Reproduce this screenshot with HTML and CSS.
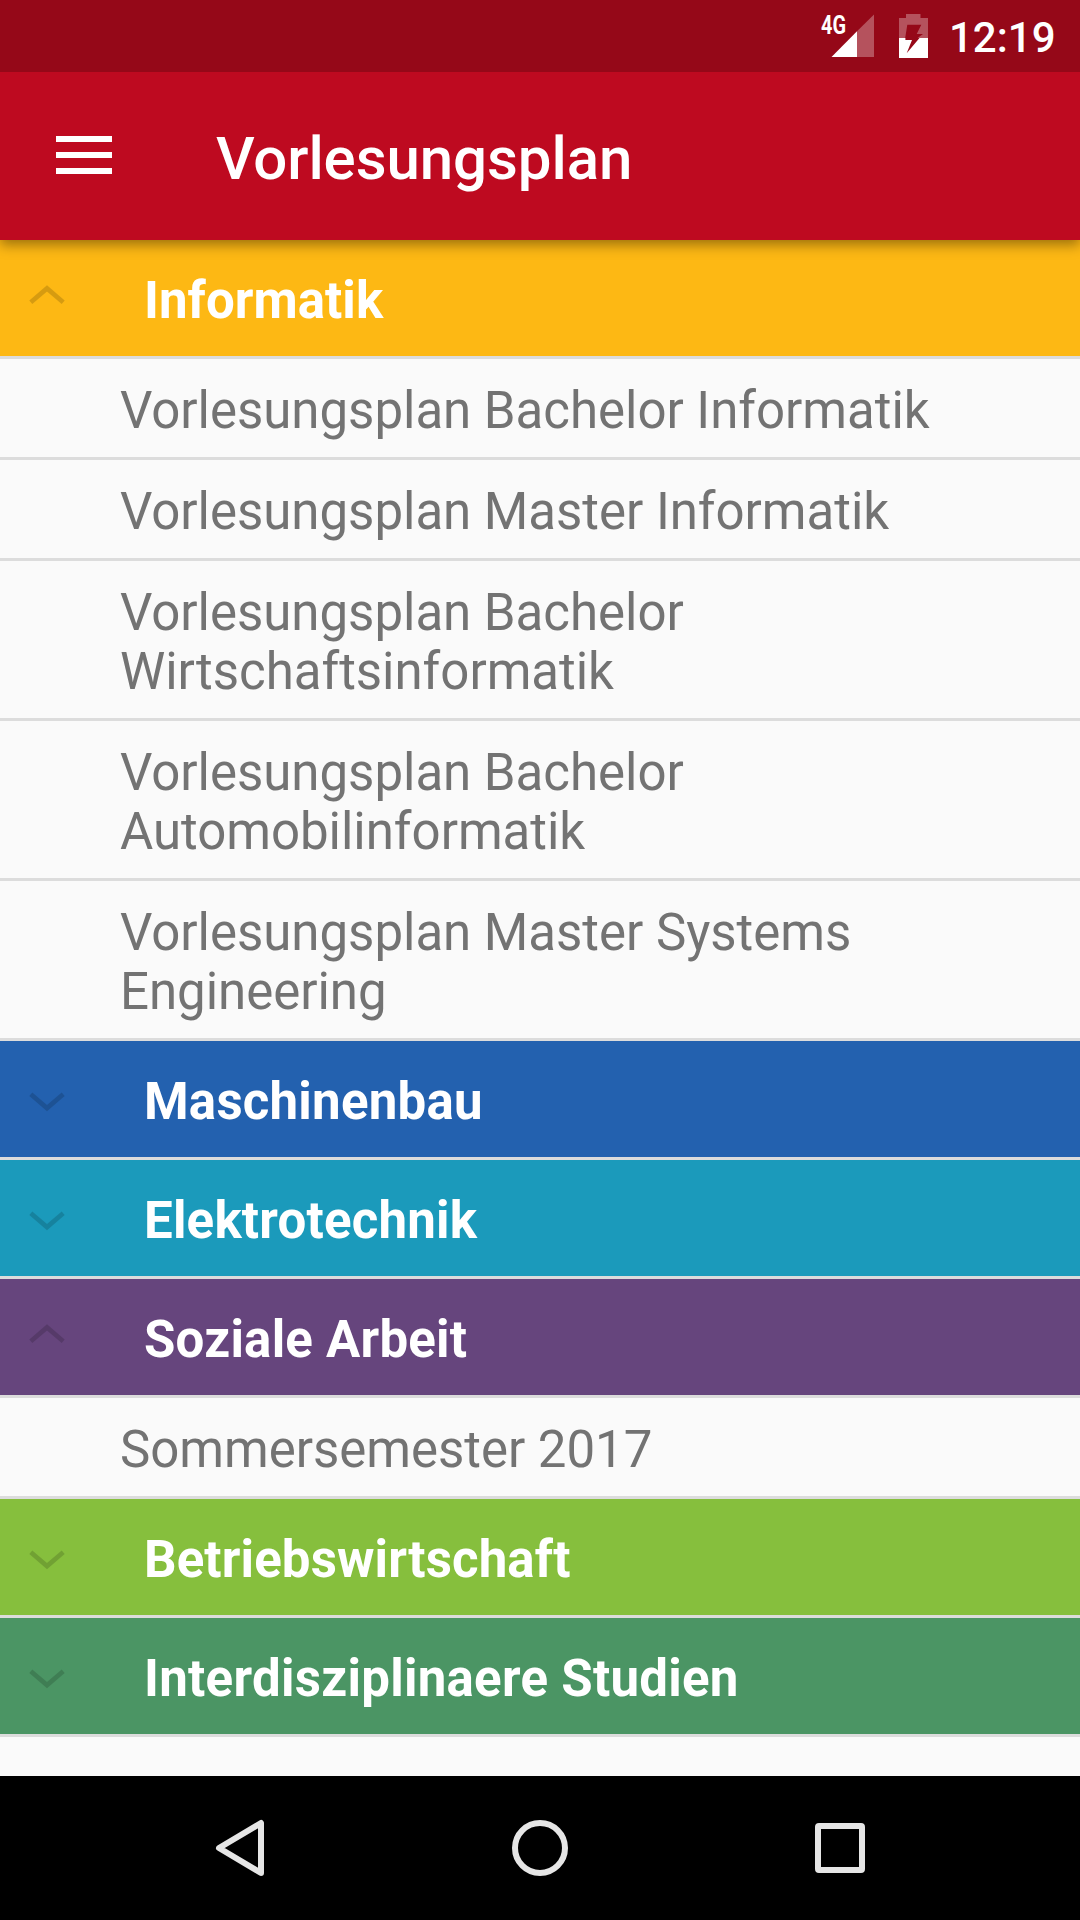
FILE: index.html
```html
<!DOCTYPE html>
<html lang="de">
<head>
<meta charset="utf-8">
<title>Vorlesungsplan</title>
<link rel="stylesheet" href="styles.css">
</head>
<body>
<svg class="symbols" width="0" height="0" aria-hidden="true">
  <symbol id="up" viewBox="0 0 36 20"><path d="M1.8 17.3 18 3.4 34.200 17.3"/></symbol>
  <symbol id="down" viewBox="0 0 36 20"><path d="M1.8 2.200 18 16.100 34.200 2.200"/></symbol>
</svg>
<div class="screen">
  <div class="status-bar">
    <svg class="signal" width="54" height="58" viewBox="0 -14 54 58">
      <path class="dim" d="M37 17.2V43H54V.5z"/>
      <path class="lit" d="M11.5 43 37 17.2V43z"/>
      <text class="network" x="1" y="19.5" textLength="25" lengthAdjust="spacingAndGlyphs">4G</text>
    </svg>
    <svg class="battery" width="29" height="44" viewBox="0 0 29 44">
      <path class="dim" d="M7 0H21.5V4H29V24H18.6L24 20H17.7L22.3 10.7H8.3L6.2 24H0V4H7z"/>
      <path class="lit" d="M0 24H6.4V26H13L7.7 39.3 20.5 24H29V44H0z"/>
    </svg>
    <span class="clock">12:19</span>
  </div>
  <header class="app-bar">
    <svg class="menu" width="56" height="38" viewBox="0 0 56 38"><path d="M0 0H56V6H0zM0 16H56V22H0zM0 32H56V38H0z"/></svg>
    <h1 class="title">Vorlesungsplan</h1>
  </header>
  <main class="list">
    <h2 class="group informatik"><svg class="chevron open"><use href="#up"/></svg><span>Informatik</span></h2>
    <div class="child">Vorlesungsplan Bachelor Informatik</div>
    <div class="child">Vorlesungsplan Master Informatik</div>
    <div class="child">Vorlesungsplan Bachelor Wirtschaftsinformatik</div>
    <div class="child">Vorlesungsplan Bachelor Automobilinformatik</div>
    <div class="child">Vorlesungsplan Master Systems Engineering</div>
    <h2 class="group maschinenbau"><svg class="chevron"><use href="#down"/></svg><span>Maschinenbau</span></h2>
    <h2 class="group elektrotechnik"><svg class="chevron"><use href="#down"/></svg><span>Elektrotechnik</span></h2>
    <h2 class="group soziale"><svg class="chevron open"><use href="#up"/></svg><span>Soziale Arbeit</span></h2>
    <div class="child">Sommersemester 2017</div>
    <h2 class="group betrieb"><svg class="chevron"><use href="#down"/></svg><span>Betriebswirtschaft</span></h2>
    <h2 class="group inter"><svg class="chevron"><use href="#down"/></svg><span>Interdisziplinaere Studien</span></h2>
  </main>
  <nav class="nav-bar">
    <svg width="60" height="60" viewBox="0 0 60 60"><path d="M51 5V55L9 30z"/></svg>
    <svg width="60" height="60" viewBox="0 0 60 60"><circle cx="30" cy="30" r="25"/></svg>
    <svg width="60" height="60" viewBox="0 0 60 60"><rect x="8" y="8" width="44" height="44" rx="1"/></svg>
  </nav>
</div>
</body>
</html>
```
FILE: styles.css
```css
* {
  box-sizing: border-box;
}

body {
  margin: 0;
  font-family: Roboto, "Liberation Sans", sans-serif;
}

.symbols {
  display: none;
}

.screen {
  display: flex;
  flex-direction: column;
  width: 1080px;
  height: 1920px;
  overflow: hidden;
  background: #fafafa;
}

.status-bar {
  position: relative;
  z-index: 2;
  display: flex;
  flex: none;
  height: 72px;
  padding: 0 25px 0 820px;
  background: #950818;
}

.signal,
.battery {
  flex: none;
}

.battery {
  margin: 14px 0 0 25px;
}

.dim {
  fill: #fff;
  fill-opacity: 0.3;
}

.lit,
.network {
  fill: #fff;
}

.network {
  font-size: 26px;
  font-weight: 700;
}

.clock {
  margin: 14px 0 0 21px;
  color: #fff;
  font-size: 42px;
  font-weight: 500;
  line-height: 47px;
}

.app-bar {
  position: relative;
  z-index: 1;
  display: flex;
  align-items: center;
  flex: none;
  height: 168px;
  padding-left: 56px;
  background: #be0a20;
  box-shadow: 0 5px 12px rgba(0, 0, 0, 0.38);
}

.menu {
  margin-top: -2px;
  fill: #fff;
}

.title {
  margin: 0 0 0 104px;
  padding-top: 5px;
  color: #fff;
  font-size: 60px;
  font-weight: 500;
  line-height: 70px;
  letter-spacing: -0.08px;
}

.list {
  flex: 1;
}

.group {
  display: flex;
  align-items: center;
  height: 119px;
  margin: 0;
  padding-left: 29px;
  border-bottom: 3px solid #dcdcdc;
  color: #fff;
  font-size: 51px;
  font-weight: 700;
  line-height: 60px;
}

.group span {
  margin-left: 79px;
  padding-top: 6px;
}

.chevron {
  width: 36px;
  height: 20px;
  margin-top: 6px;
  fill: none;
  stroke: #000;
  stroke-width: 4.6;
  opacity: 0.15;
}

.chevron.open {
  margin-top: -6px;
}

.informatik {
  background: #fdb814;
  letter-spacing: 0.05px;
}

.maschinenbau {
  background: #2361af;
  letter-spacing: 0.22px;
}

.elektrotechnik {
  background: #1b9abb;
  letter-spacing: 0.22px;
}

.soziale {
  background: #66457d;
  letter-spacing: 0.22px;
}

.betrieb {
  background: #86bf3d;
  letter-spacing: 0.13px;
}

.inter {
  background: #4b9564;
  letter-spacing: 0.28px;
}

.child {
  padding: 22px 120px 17px;
  border-bottom: 3px solid #dcdcdc;
  color: #737373;
  font-size: 51px;
  line-height: 59px;
  letter-spacing: -0.03px;
}

.nav-bar {
  display: flex;
  align-items: center;
  justify-content: center;
  gap: 240px;
  flex: none;
  height: 144px;
  background: #000;
  fill: none;
  stroke: #e6e6e6;
  stroke-width: 6;
  stroke-linejoin: round;
}
```
